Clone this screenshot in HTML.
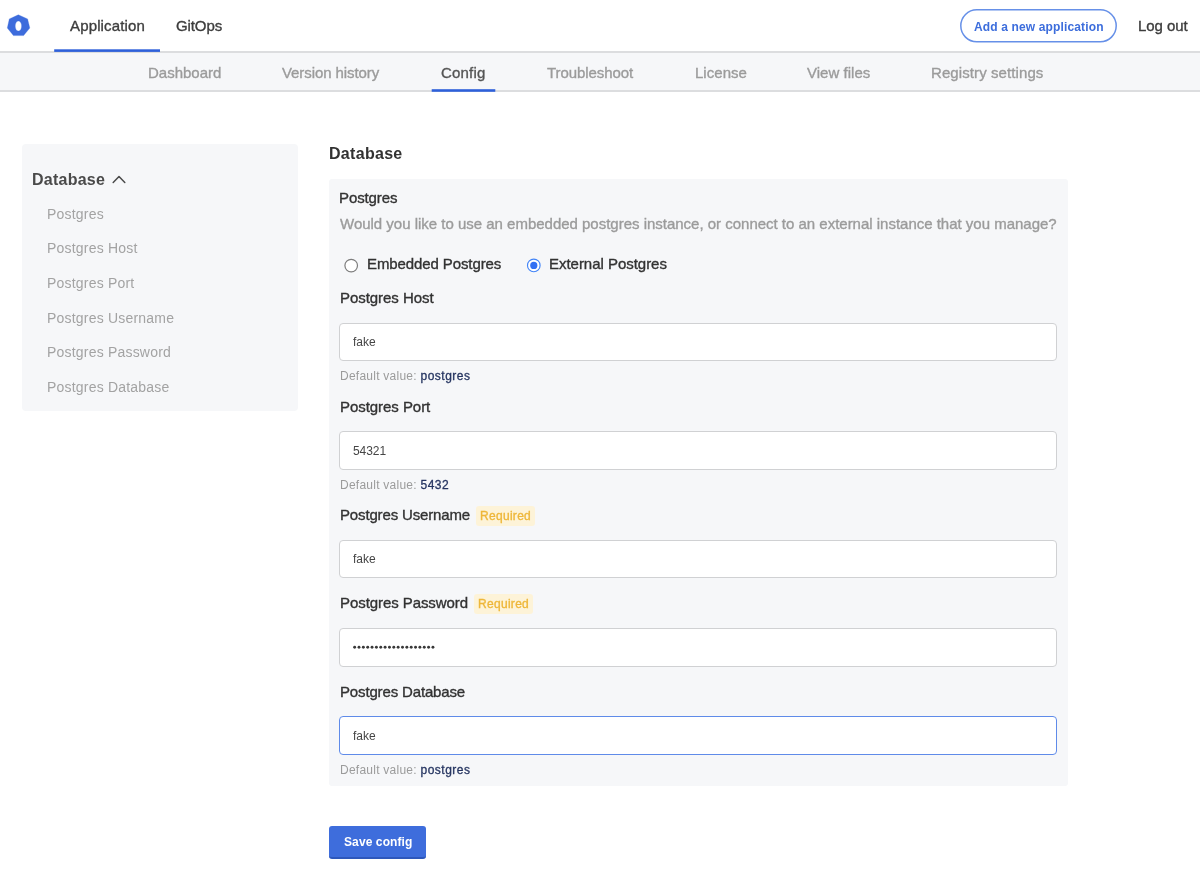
<!DOCTYPE html>
<html><head><meta charset="utf-8"><title>Config</title>
<style>
html,body{margin:0;padding:0;background:#fff;width:1200px;height:874px;overflow:hidden;position:relative;font-family:"Liberation Sans", sans-serif;}
.t{position:absolute;white-space:nowrap;will-change:transform;}
.m{-webkit-text-stroke:0.35px currentColor;}
.b{position:absolute;}
</style></head><body>
<div class="b" style="left:0px;top:51px;width:1200px;height:2px;background:#dcdddf"></div>
<div class="b" style="left:0px;top:53px;width:1200px;height:37px;background:#f6f7f9"></div>
<div class="b" style="left:0px;top:90px;width:1200px;height:2px;background:#dcdddf"></div>
<svg class="b" style="left:0;top:0" width="40" height="45" viewBox="0 0 40 45"><path fill="#3d6cdc" stroke="#3d6cdc" stroke-width="0.3" stroke-linejoin="round" fill-rule="evenodd" d="M18.3 14.8 L27.6 18.9 L29.8 28 L23.6 35.6 L13.4 35.6 L7.3 28 L9.3 18.9 Z M18.4 21.1 A3.2 5 0 1 0 18.4 31.1 A3.2 5 0 1 0 18.4 21.1 Z"/></svg>
<div class="t m" style="left:69.50px;top:17.50px;font-size:15px;line-height:15px;color:#3d3d3d;font-weight:400;letter-spacing:0.15px;">Application</div>
<svg class="b" style="left:0;top:0" width="200" height="60"><rect x="54.2" y="49.3" width="105.8" height="2.6" fill="#2e60da"/></svg>
<div class="t m" style="left:175.50px;top:18.00px;font-size:15px;line-height:15px;color:#3d3d3d;font-weight:400;letter-spacing:-0.1px;">GitOps</div>
<svg class="b" style="left:960px;top:9px" width="157" height="34" viewBox="0 0 157 34"><rect x="0.8" y="0.8" width="155.4" height="32" rx="16" fill="#fff" stroke="#6690e8" stroke-width="1.5"/></svg>
<div class="t" style="left:973.50px;top:21.25px;font-size:12px;line-height:12px;color:#3c6ddc;font-weight:700;letter-spacing:0.14px;">Add a new application</div>
<div class="t m" style="left:1138.00px;top:18.25px;font-size:15px;line-height:15px;color:#3d3d3d;font-weight:400;letter-spacing:-0.05px;">Log out</div>
<div class="t m" style="left:148.00px;top:64.50px;font-size:15px;line-height:15px;color:#9b9b9b;font-weight:400;letter-spacing:-0.01px;">Dashboard</div>
<div class="t m" style="left:282.00px;top:64.50px;font-size:15px;line-height:15px;color:#9b9b9b;font-weight:400;letter-spacing:-0.08px;">Version history</div>
<div class="t m" style="left:440.70px;top:64.50px;font-size:15px;line-height:15px;color:#555555;font-weight:400;letter-spacing:0.2px;">Config</div>
<div class="t m" style="left:546.50px;top:64.50px;font-size:15px;line-height:15px;color:#9b9b9b;font-weight:400;letter-spacing:-0.07px;">Troubleshoot</div>
<div class="t m" style="left:694.50px;top:64.50px;font-size:15px;line-height:15px;color:#9b9b9b;font-weight:400;letter-spacing:0.03px;">License</div>
<div class="t m" style="left:807.00px;top:64.50px;font-size:15px;line-height:15px;color:#9b9b9b;font-weight:400;letter-spacing:0.02px;">View files</div>
<div class="t m" style="left:931.00px;top:64.50px;font-size:15px;line-height:15px;color:#9b9b9b;font-weight:400;letter-spacing:0.09px;">Registry settings</div>
<svg class="b" style="left:400px;top:80px" width="120" height="15"><rect x="31.7" y="9.2" width="63.6" height="2.6" fill="#2e60da"/></svg>
<div class="b" style="left:21.5px;top:144px;width:276.5px;height:266.5px;background:#f6f7f9;border-radius:4px"></div>
<div class="t" style="left:32.00px;top:171.50px;font-size:16px;line-height:16px;color:#4a4a4a;font-weight:700;letter-spacing:0.25px;">Database</div>
<svg class="b" style="left:111px;top:174px" width="16" height="11" viewBox="0 0 16 11"><path d="M2.2 8.5 L8 2.5 L13.8 8.5" fill="none" stroke="#4a4a4a" stroke-width="1.5" stroke-linecap="round" stroke-linejoin="round"/></svg>
<div class="t" style="left:46.70px;top:206.50px;font-size:14px;line-height:14px;color:#a3a3a3;font-weight:400;letter-spacing:0.2px;">Postgres</div>
<div class="t" style="left:46.70px;top:241.20px;font-size:14px;line-height:14px;color:#a3a3a3;font-weight:400;letter-spacing:0.2px;">Postgres Host</div>
<div class="t" style="left:46.70px;top:276.10px;font-size:14px;line-height:14px;color:#a3a3a3;font-weight:400;letter-spacing:0.2px;">Postgres Port</div>
<div class="t" style="left:46.70px;top:310.90px;font-size:14px;line-height:14px;color:#a3a3a3;font-weight:400;letter-spacing:0.2px;">Postgres Username</div>
<div class="t" style="left:46.70px;top:345.40px;font-size:14px;line-height:14px;color:#a3a3a3;font-weight:400;letter-spacing:0.2px;">Postgres Password</div>
<div class="t" style="left:46.70px;top:380.00px;font-size:14px;line-height:14px;color:#a3a3a3;font-weight:400;letter-spacing:0.2px;">Postgres Database</div>
<div class="t" style="left:329.25px;top:145.90px;font-size:16px;line-height:16px;color:#323232;font-weight:700;letter-spacing:0.3px;">Database</div>
<div class="b" style="left:329px;top:179px;width:738.5px;height:606.5px;background:#f6f7f9;border-radius:3px"></div>
<div class="t m" style="left:339.25px;top:190.10px;font-size:15px;line-height:15px;color:#323232;font-weight:400;letter-spacing:-0.1px;">Postgres</div>
<div class="t m" style="left:339.50px;top:216.20px;font-size:15px;line-height:15px;color:#9b9b9b;font-weight:400;letter-spacing:-0.01px;">Would you like to use an embedded postgres instance, or connect to an external instance that you manage?</div>
<svg class="b" style="left:343px;top:258px" width="17" height="16" viewBox="0 0 17 16"><circle cx="8.2" cy="7.6" r="6.3" fill="#fff" stroke="#7d7d7d" stroke-width="1.2"/></svg>
<div class="t m" style="left:366.50px;top:256.20px;font-size:15px;line-height:15px;color:#323232;font-weight:400;letter-spacing:-0.1px;">Embedded Postgres</div>
<svg class="b" style="left:525px;top:258px" width="17" height="16" viewBox="0 0 17 16"><circle cx="8.8" cy="7.4" r="6.3" fill="#fff" stroke="#4284f7" stroke-width="1.15"/><circle cx="8.8" cy="7.4" r="3.6" fill="#3270f3"/></svg>
<div class="t m" style="left:549.10px;top:256.20px;font-size:15px;line-height:15px;color:#323232;font-weight:400;letter-spacing:-0.03px;">External Postgres</div>
<div class="t m" style="left:339.50px;top:289.80px;font-size:15px;line-height:15px;color:#323232;font-weight:400;letter-spacing:-0.05px;">Postgres Host</div>
<div class="b" style="left:339px;top:322.5px;width:718px;height:38.5px;background:#fff;border:1px solid #d0d1d3;border-radius:4px;box-sizing:border-box"></div>
<div class="t" style="left:353.10px;top:335.80px;font-size:12px;line-height:12px;color:#454545;font-weight:400;letter-spacing:0px;">fake</div>
<div class="t" style="left:339.50px;top:369.50px;font-size:12px;line-height:12px;color:#9b9b9b;font-weight:400;letter-spacing:0.25px;">Default value: <span style="color:#263561;-webkit-text-stroke:0.3px #263561;letter-spacing:0.5px">postgres</span></div>
<div class="t m" style="left:339.50px;top:398.70px;font-size:15px;line-height:15px;color:#323232;font-weight:400;letter-spacing:-0.05px;">Postgres Port</div>
<div class="b" style="left:339px;top:431px;width:718px;height:38.5px;background:#fff;border:1px solid #d0d1d3;border-radius:4px;box-sizing:border-box"></div>
<div class="t" style="left:353.10px;top:444.80px;font-size:12px;line-height:12px;color:#454545;font-weight:400;letter-spacing:-0.05px;">54321</div>
<div class="t" style="left:339.50px;top:478.60px;font-size:12px;line-height:12px;color:#9b9b9b;font-weight:400;letter-spacing:0.25px;">Default value: <span style="color:#263561;-webkit-text-stroke:0.3px #263561;letter-spacing:0.5px">5432</span></div>
<div class="t m" style="left:339.50px;top:507.00px;font-size:15px;line-height:15px;color:#323232;font-weight:400;letter-spacing:-0.15px;">Postgres Username</div>
<div class="b" style="left:476px;top:506px;width:59px;height:20px;background:#fdf3d8;border-radius:3px"></div>
<div class="t m" style="left:480.00px;top:510.30px;font-size:12px;line-height:12px;color:#eeb73a;font-weight:400;letter-spacing:0.3px;">Required</div>
<div class="b" style="left:339px;top:539.7px;width:718px;height:38.5px;background:#fff;border:1px solid #d0d1d3;border-radius:4px;box-sizing:border-box"></div>
<div class="t" style="left:353.10px;top:552.70px;font-size:12px;line-height:12px;color:#454545;font-weight:400;letter-spacing:0px;">fake</div>
<div class="t m" style="left:339.50px;top:595.00px;font-size:15px;line-height:15px;color:#323232;font-weight:400;letter-spacing:-0.07px;">Postgres Password</div>
<div class="b" style="left:473.7px;top:594px;width:59px;height:20px;background:#fdf3d8;border-radius:3px"></div>
<div class="t m" style="left:477.70px;top:598.30px;font-size:12px;line-height:12px;color:#eeb73a;font-weight:400;letter-spacing:0.3px;">Required</div>
<div class="b" style="left:339px;top:628px;width:718px;height:38.5px;background:#fff;border:1px solid #d0d1d3;border-radius:4px;box-sizing:border-box"></div>
<svg class="b" style="left:0;top:0" width="1200" height="874"><circle cx="354.65" cy="647.2" r="1.45" fill="#383838"/><circle cx="359.00" cy="647.2" r="1.45" fill="#383838"/><circle cx="363.35" cy="647.2" r="1.45" fill="#383838"/><circle cx="367.70" cy="647.2" r="1.45" fill="#383838"/><circle cx="372.05" cy="647.2" r="1.45" fill="#383838"/><circle cx="376.40" cy="647.2" r="1.45" fill="#383838"/><circle cx="380.75" cy="647.2" r="1.45" fill="#383838"/><circle cx="385.10" cy="647.2" r="1.45" fill="#383838"/><circle cx="389.45" cy="647.2" r="1.45" fill="#383838"/><circle cx="393.80" cy="647.2" r="1.45" fill="#383838"/><circle cx="398.15" cy="647.2" r="1.45" fill="#383838"/><circle cx="402.50" cy="647.2" r="1.45" fill="#383838"/><circle cx="406.85" cy="647.2" r="1.45" fill="#383838"/><circle cx="411.20" cy="647.2" r="1.45" fill="#383838"/><circle cx="415.55" cy="647.2" r="1.45" fill="#383838"/><circle cx="419.90" cy="647.2" r="1.45" fill="#383838"/><circle cx="424.25" cy="647.2" r="1.45" fill="#383838"/><circle cx="428.60" cy="647.2" r="1.45" fill="#383838"/><circle cx="432.95" cy="647.2" r="1.45" fill="#383838"/></svg>
<div class="t m" style="left:339.50px;top:683.50px;font-size:15px;line-height:15px;color:#323232;font-weight:400;letter-spacing:-0.15px;">Postgres Database</div>
<div class="b" style="left:339px;top:716px;width:718px;height:38.5px;background:#fff;border:1px solid #5f8be9;border-radius:4px;box-sizing:border-box"></div>
<div class="t" style="left:353.10px;top:729.50px;font-size:12px;line-height:12px;color:#454545;font-weight:400;letter-spacing:0px;">fake</div>
<div class="t" style="left:339.50px;top:763.50px;font-size:12px;line-height:12px;color:#9b9b9b;font-weight:400;letter-spacing:0.25px;">Default value: <span style="color:#263561;-webkit-text-stroke:0.3px #263561;letter-spacing:0.5px">postgres</span></div>
<div class="b" style="left:329px;top:826px;width:97px;height:33px;background:#3e6ddc;border-radius:3px;border-bottom:2px solid #2d57bb;box-sizing:border-box"></div>
<div class="t" style="left:344.00px;top:836.00px;font-size:12px;line-height:12px;color:#fff;font-weight:700;letter-spacing:0.1px;">Save config</div>
</body></html>
